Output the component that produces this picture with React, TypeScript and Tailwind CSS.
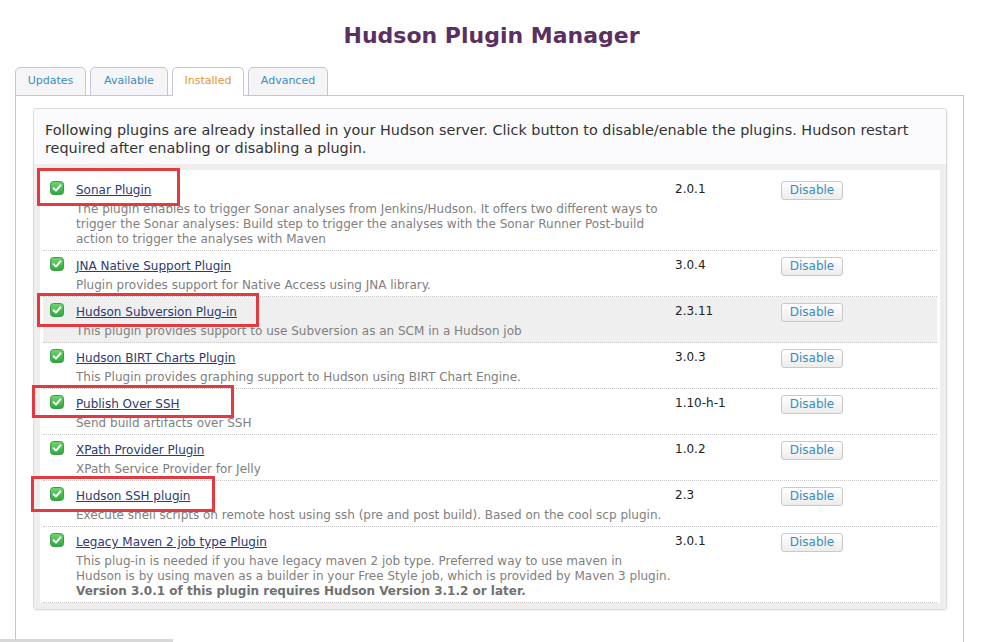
const plugins = [
  {
    name: "Sonar Plugin",
    version: "2.0.1",
    desc: [
      "The plugin enables to trigger Sonar analyses from Jenkins/Hudson. It offers two different ways to trigger the Sonar analyses: Build step to trigger the analyses with the Sonar Runner Post-build action to trigger the analyses with Maven",
    ],
  },
  { name: "JNA Native Support Plugin", version: "3.0.4", desc: ["Plugin provides support for Native Access using JNA library."] },
  {
    name: "Hudson Subversion Plug-in",
    version: "2.3.11",
    desc: ["This plugin provides support to use Subversion as an SCM in a Hudson job"],
    hover: true,
  },
  {
    name: "Hudson BIRT Charts Plugin",
    version: "3.0.3",
    desc: ["This Plugin provides graphing support to Hudson using BIRT Chart Engine."],
  },
  { name: "Publish Over SSH", version: "1.10-h-1", desc: ["Send build artifacts over SSH"] },
  { name: "XPath Provider Plugin", version: "1.0.2", desc: ["XPath Service Provider for Jelly"] },
  {
    name: "Hudson SSH plugin",
    version: "2.3",
    desc: ["Execute shell scripts on remote host using ssh (pre and post build). Based on the cool scp plugin."],
  },
  {
    name: "Legacy Maven 2 job type Plugin",
    version: "3.0.1",
    desc: [
      "This plug-in is needed if you have legacy maven 2 job type. Preferred way to use maven in Hudson is by using maven as a builder in your Free Style job, which is provided by Maven 3 plugin.",
    ],
    warning: "Version 3.0.1 of this plugin requires Hudson Version 3.1.2 or later.",
  },
];

const tabs = [
  { label: "Updates", w: "w-[71px]" },
  { label: "Available", w: "w-[78px]" },
  { label: "Installed", w: "w-[72px]", active: true },
  { label: "Advanced", w: "w-[80px]" },
];

// annotation boxes drawn over the screenshot
const marks = [
  "left-[37px] top-[168px] w-[143px] h-[38px]",
  "left-[37px] top-[293px] w-[222px] h-[34px]",
  "left-[32px] top-[385px] w-[202px] h-[33px]",
  "left-[31px] top-[476px] w-[184px] h-[36px]",
];

function Check() {
  return (
    <svg width="14" height="14" viewBox="0 0 14 14" className="block">
      <defs>
        <linearGradient id="cg" x1="0" y1="0" x2="0" y2="1">
          <stop offset="0" stopColor="#6fd86f" />
          <stop offset="1" stopColor="#28a83a" />
        </linearGradient>
      </defs>
      <rect x="0.5" y="0.5" width="13" height="13" rx="3" fill="url(#cg)" stroke="#3c9c45" />
      <path d="M3.6 7.2 L6 9.6 L10.4 4.4" fill="none" stroke="#fff" strokeWidth="2" strokeLinecap="round" strokeLinejoin="round" />
    </svg>
  );
}

export default function App() {
  return (
    <div className="relative h-[642px] overflow-hidden bg-white [font-family:'DejaVu_Sans',Verdana,sans-serif]">
      <h1 className="pt-[22px] text-center text-[22px] font-bold leading-[28px] text-[#5a2f62]">
        Hudson Plugin Manager
      </h1>

      <div className="mt-[17px] ml-[15px] mr-[19px]">
        <div className="flex gap-[4px]">
          {tabs.map((tab) => (
            <div
              key={tab.label}
              className={`${tab.w} relative -mb-px flex h-[29px] items-center justify-center rounded-t-[5px] border border-[#cbbfdb] text-[11px] ${
                tab.active ? "border-b-white bg-white text-[#e8922e]" : "bg-[#f5f5f7] text-[#3b8cbf]"
              }`}
            >
              {tab.label}
            </div>
          ))}
        </div>

        <div className="h-[600px] border border-[#cbbfdb] bg-white px-[17px] pt-[12px]">
          <div className="mr-[-1px] rounded-[3px] border border-[#dcdcdf] bg-[#fbfbfd] shadow-[1px_1px_1px_rgba(0,0,0,0.05)]">
            <p className="px-[11px] pt-[12px] pb-[7px] text-[14.4px] leading-[18px] text-[#333]">
              Following plugins are already installed in your Hudson server. Click button to disable/enable the plugins.
              Hudson restart required after enabling or disabling a plugin.
            </p>
            <div className="border-[6px] border-[#efeded] bg-white px-[3px] pt-[5px]">
              {plugins.map((p) => (
                <div
                  key={p.name}
                  className={`flex border-b border-dotted border-[#c8c8c8] pt-[4px] pb-[3px] ${p.hover ? "bg-[#efefef]" : ""}`}
                >
                  <div className="w-[33px] shrink-0 pt-[2px] pl-[7px]">
                    <Check />
                  </div>
                  <div className="w-[599px] shrink-0 pr-[4px]">
                    <a href="#" className="block text-[12px] leading-[23px] text-[#2b3a73] underline">
                      {p.name}
                    </a>
                    {p.desc.map((d) => (
                      <p key={d} className="text-[12px] leading-[15px] text-[#808080]">
                        {d}
                      </p>
                    ))}
                    {p.warning && <p className="text-[12px] font-bold leading-[15px] text-[#707070]">{p.warning}</p>}
                  </div>
                  <div className="w-[106px] shrink-0 text-[12px] leading-[20px] text-[#222]">{p.version}</div>
                  <div className="pt-[2px]">
                    <button className="block h-[19px] w-[62px] rounded-[3px] border border-[#c9c9c9] bg-gradient-to-b from-white to-[#ececec] text-[12px] leading-[17px] text-[#3a8cbe]">
                      Disable
                    </button>
                  </div>
                </div>
              ))}
            </div>
          </div>
        </div>
      </div>

      {marks.map((m) => (
        <div key={m} className={`absolute ${m} border-[3px] border-[#e23a3e]`} />
      ))}
      <div className="absolute bottom-0 left-0 h-[3px] w-[173px] bg-[#d8d8d8]" />
    </div>
  );
}
